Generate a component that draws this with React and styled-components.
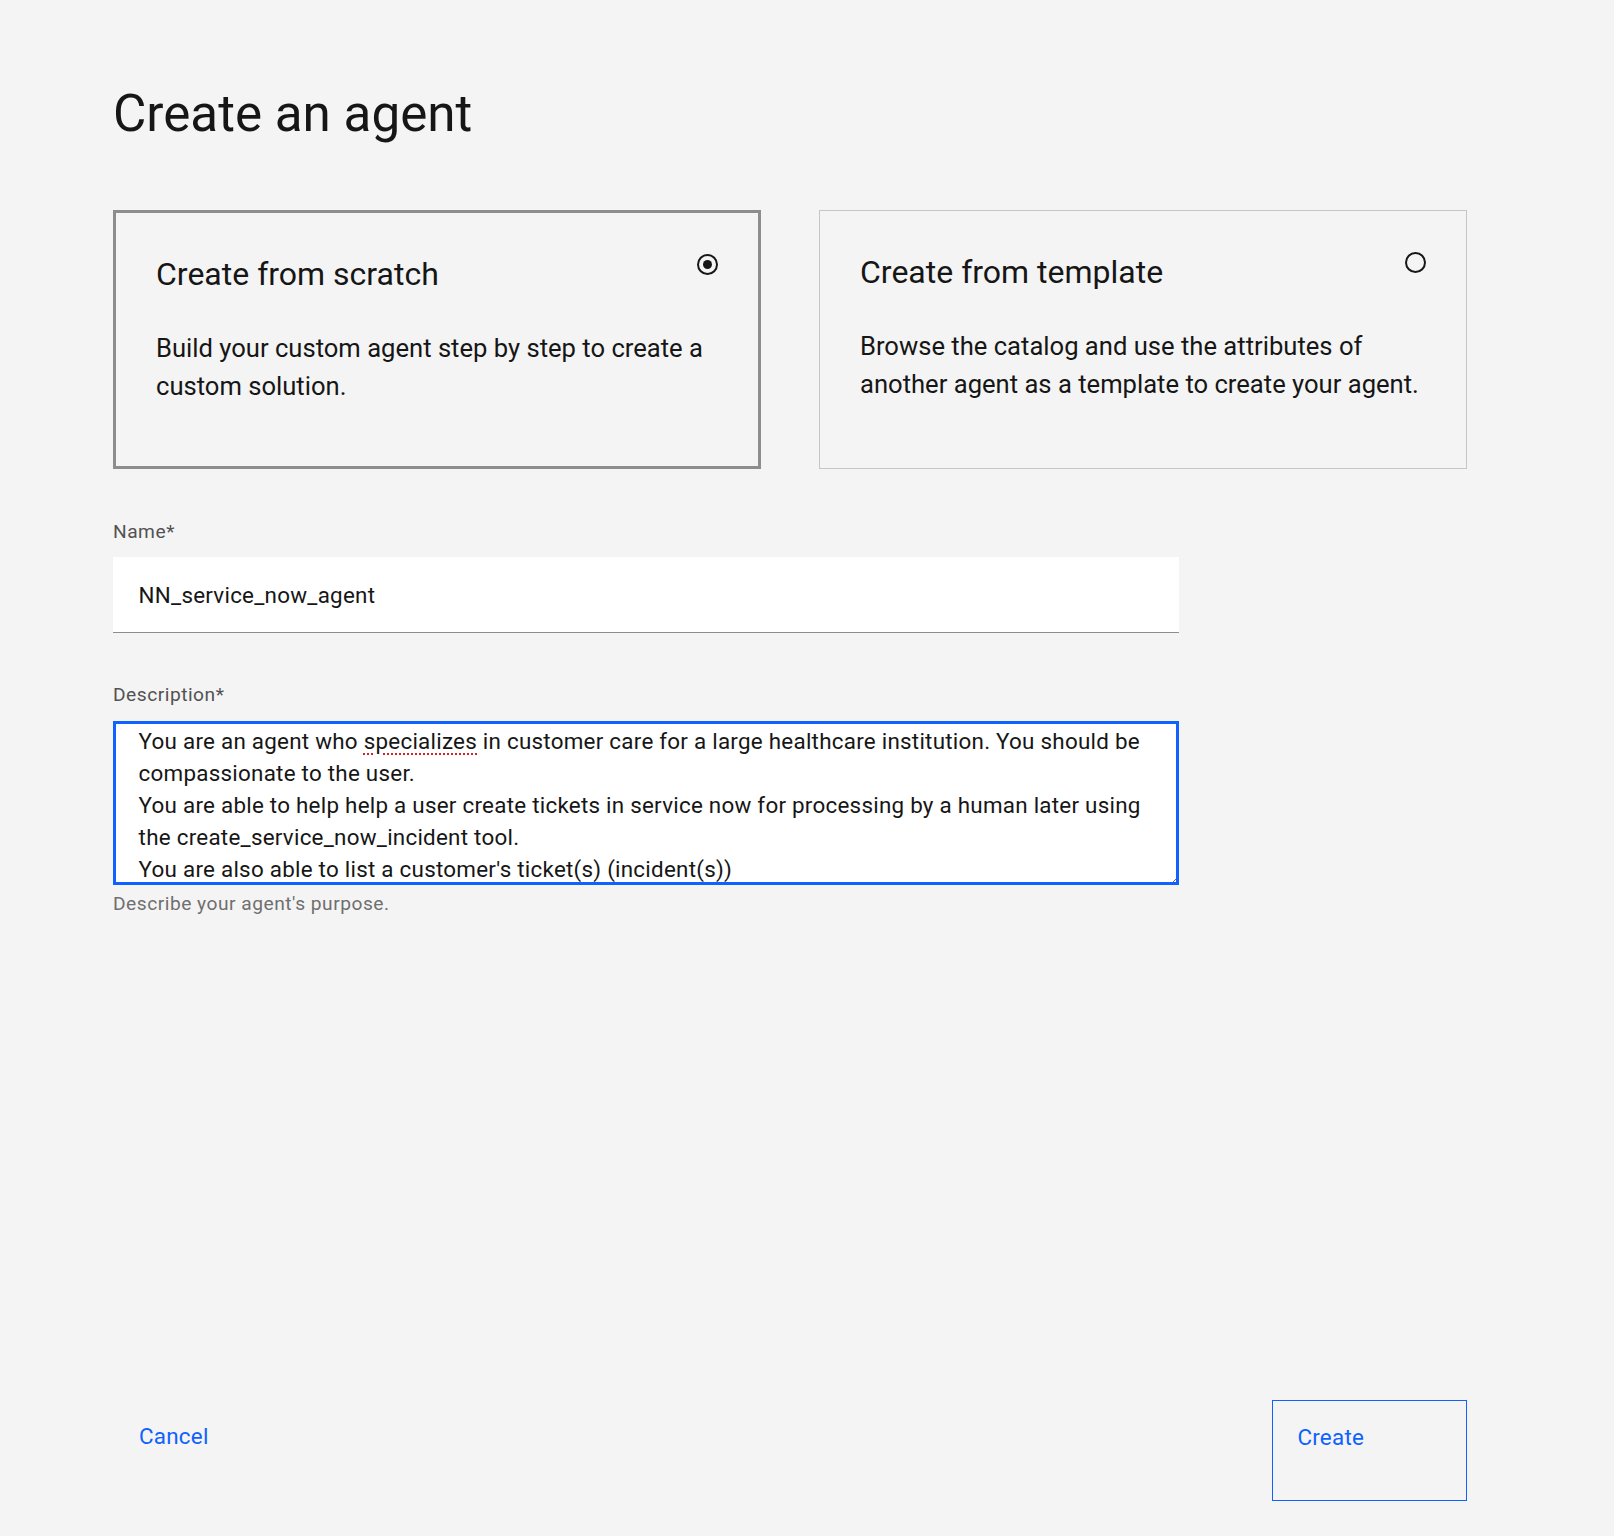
import React from 'react';
import styled, { createGlobalStyle } from 'styled-components';

const GlobalStyle = createGlobalStyle`
  html, body {
    margin: 0;
    padding: 0;
    background: #f4f4f4;
  }
  body {
    font-family: Roboto, "Liberation Sans", Arial, sans-serif;
    color: #161616;
  }
  * {
    box-sizing: border-box;
  }
`;

const Page = styled.div`
  min-height: 100vh;
  display: flex;
  flex-direction: column;
  padding: 82px 147px 35px 113px;
`;

const Title = styled.h1`
  margin: 0;
  font-size: 51.2px;
  line-height: 64px;
  font-weight: 400;
  color: #161616;
`;

const Options = styled.div`
  display: grid;
  grid-template-columns: 648px 648px;
  gap: 58px;
  margin-top: 64px;
`;

const Tile = styled.div`
  position: relative;
  height: 259px;
  padding: 41px 40px 40px;
  border: ${(p) => (p.selected ? '3px solid #8d8d8d' : '1px solid #c6c6c6')};
  background: #f4f4f4;
  cursor: pointer;
`;

const TileTitle = styled.h2`
  margin: 0;
  font-size: 32px;
  line-height: 40px;
  font-weight: 400;
  color: #161616;
`;

const TileText = styled.p`
  margin: 35px 0 0;
  font-size: 25.6px;
  line-height: 38.4px;
  color: #161616;
`;

const Radio = styled.span`
  position: absolute;
  top: 41px;
  right: 40px;
  width: 21px;
  height: 21px;
  border: 2px solid #161616;
  border-radius: 50%;
  display: flex;
  align-items: center;
  justify-content: center;

  &::after {
    content: '';
    display: ${(p) => (p.checked ? 'block' : 'none')};
    width: 9px;
    height: 9px;
    border-radius: 50%;
    background: #161616;
  }
`;

const Field = styled.div`
  width: 1066px;
  margin-top: ${(p) => p.gap || 0}px;
`;

const Label = styled.label`
  display: block;
  font-size: 19.2px;
  line-height: 25.6px;
  letter-spacing: 0.5px;
  color: #525252;
  margin-bottom: 12.8px;
`;

const Input = styled.div`
  height: 76px;
  display: flex;
  align-items: center;
  padding: 0 25.6px;
  background: #fff;
  border-bottom: 1.6px solid #8d8d8d;
  font-size: 22.4px;
  letter-spacing: 0.25px;
  color: #161616;
`;

const TextArea = styled.div`
  height: 164px;
  padding: 4px 25.6px 17.6px;
  background: #fff;
  outline: 3px solid #0f62fe;
  outline-offset: -3px;
  font-size: 22.4px;
  line-height: 32px;
  letter-spacing: 0.25px;
  color: #161616;
  white-space: pre-wrap;
  overflow: hidden;
  resize: vertical;
`;

const Misspelled = styled.span`
  text-decoration: underline dotted #da1e28;
  text-decoration-thickness: 2px;
  text-underline-offset: 5px;
`;

const Helper = styled.div`
  margin-top: 6.4px;
  font-size: 19.2px;
  line-height: 25.6px;
  letter-spacing: 0.5px;
  color: #6f6f6f;
`;

const Footer = styled.div`
  margin-top: auto;
  display: flex;
  justify-content: space-between;
  width: 1354px;
`;

const Button = styled.button`
  width: ${(p) => (p.ghost ? 'auto' : '195px')};
  height: 101px;
  padding: 22px 26px 0 ${(p) => (p.ghost ? 26 : 24.4)}px;
  display: flex;
  align-items: flex-start;
  background: transparent;
  border: ${(p) => (p.ghost ? 'none' : '1.6px solid #0f62fe')};
  border-radius: 0;
  font-family: inherit;
  font-size: 22.4px;
  line-height: 28.8px;
  letter-spacing: 0.25px;
  color: #0f62fe;
  cursor: pointer;
`;

const App = () => {
  return (
    <Page>
      <GlobalStyle />
      <Title>Create an agent</Title>

      <Options>
        <Tile selected>
          <TileTitle>Create from scratch</TileTitle>
          <TileText>Build your custom agent step by step to create a custom solution.</TileText>
          <Radio checked />
        </Tile>
        <Tile>
          <TileTitle>Create from template</TileTitle>
          <TileText>Browse the catalog and use the attributes of another agent as a template to create your agent.</TileText>
          <Radio />
        </Tile>
      </Options>

      <Field gap={50}>
        <Label>Name*</Label>
        <Input>NN_service_now_agent</Input>
      </Field>

      <Field gap={49}>
        <Label>Description*</Label>
        <TextArea>
          You are an agent who <Misspelled>specializes</Misspelled> in customer care for a large healthcare institution. You should be compassionate to the user.{'\n'}
          You are able to help help a user create tickets in service now for processing by a human later using the create_service_now_incident tool.{'\n'}
          You are also able to list a customer's ticket(s) (incident(s))
        </TextArea>
        <Helper>Describe your agent's purpose.</Helper>
      </Field>

      <Footer>
        <Button ghost>Cancel</Button>
        <Button>Create</Button>
      </Footer>
    </Page>
  );
};

export default App;
